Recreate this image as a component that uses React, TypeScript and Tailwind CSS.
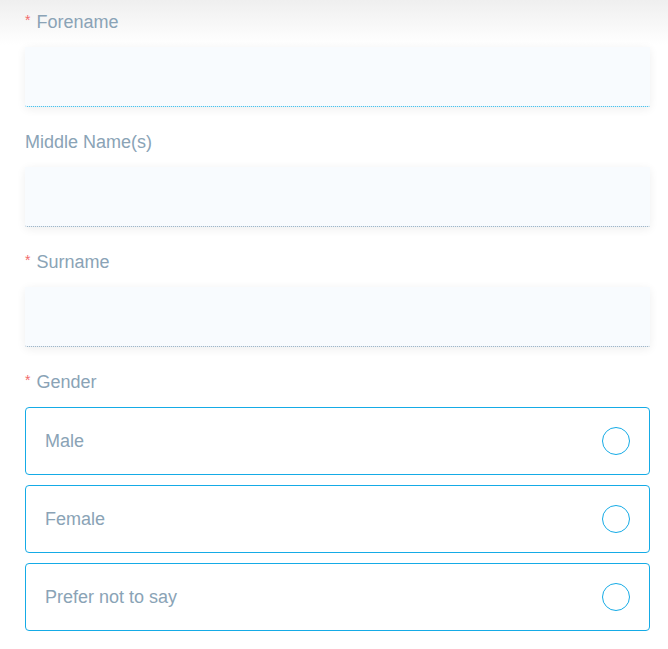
import React from "react";

const fields = [
  { label: "Forename", required: true, active: true },
  { label: "Middle Name(s)", required: false, active: false },
  { label: "Surname", required: true, active: false },
];

const genders = ["Male", "Female", "Prefer not to say"];

function Label({ text, required }: { text: string; required: boolean }) {
  return (
    <label className="flex items-center h-[22px] text-[18px] text-[#8aa3b6]">
      {required && <span className="text-[#f26b6b] text-[14px] mr-[6px] -mt-[4px]">*</span>}
      {text}
    </label>
  );
}

export default function App() {
  return (
    <div
      className="min-h-screen w-full bg-[linear-gradient(to_bottom,#efefef,#ffffff_45px)] pl-[25px] pr-[18px] pt-[11px] pb-[14px]"
      style={{ fontFamily: '"Liberation Sans", Arial, sans-serif' }}
    >
      {fields.map((f) => (
        <div key={f.label} className="mb-[24px]">
          <Label text={f.label} required={f.required} />
          <div
            className={`mt-[14px] h-[60px] bg-[#f8fbfe] rounded-b-[2px] border-b border-dotted shadow-[0_2px_10px_rgba(0,0,0,0.07)] ${
              f.active ? "border-[#29b6e8]" : "border-[#8ea8bd]"
            }`}
          />
        </div>
      ))}

      <Label text="Gender" required />
      <div className="mt-[14px] flex flex-col gap-[10px]">
        {genders.map((g) => (
          <div
            key={g}
            className="h-[68px] flex items-center justify-between border border-[#15abe6] rounded-[4px] pl-[19px] pr-[19px] bg-white"
          >
            <span className="text-[18px] text-[#8aa3b6]">{g}</span>
            <span className="w-[28px] h-[28px] rounded-full border-[1.5px] border-[#15abe6]" />
          </div>
        ))}
      </div>
    </div>
  );
}
